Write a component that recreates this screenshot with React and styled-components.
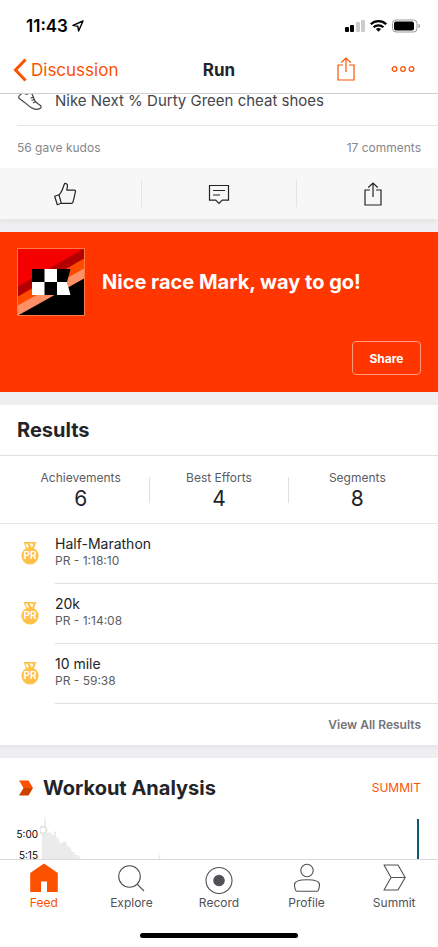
import React from "react";
import styled, { createGlobalStyle } from "styled-components";

const stats = [
  { label: "Achievements", value: 6 },
  { label: "Best Efforts", value: 4 },
  { label: "Segments", value: 8 },
];

const results = [
  { name: "Half-Marathon", time: "1:18:10" },
  { name: "20k", time: "1:14:08" },
  { name: "10 mile", time: "59:38" },
];

const tabs = [
  { name: "Feed", Icon: HomeIcon },
  { name: "Explore", Icon: SearchIcon },
  { name: "Record", Icon: RecordIcon },
  { name: "Profile", Icon: ProfileIcon },
  { name: "Summit", Icon: SummitIcon },
];

export default function App() {
  return (
    <>
      <GlobalStyle />
      <Screen>
        <StatusBar>
          <Clock>
            11:43
            <LocationIcon />
          </Clock>
          <StatusIcons />
        </StatusBar>

        <NavBar>
          <BackLink href="#discussion">
            <BackIcon />
            Discussion
          </BackLink>
          <NavTitle>Run</NavTitle>
          <NavActions>
            <IconButton aria-label="Share activity">
              <ShareIcon width={20} height={26} />
            </IconButton>
            <IconButton aria-label="More">
              <MoreIcon />
            </IconButton>
          </NavActions>
        </NavBar>

        <Feed>
          <Card>
            <GearRow>
              <ShoeIcon />
              <GearName>Nike Next % Durty Green cheat shoes</GearName>
            </GearRow>
            <KudosRow>
              <span>56 gave kudos</span>
              <span>17 comments</span>
            </KudosRow>
            <ActionBar>
              <ActionList>
                <ActionButton aria-label="Give kudos">
                  <ThumbIcon />
                </ActionButton>
                <ActionButton aria-label="Comment">
                  <CommentIcon />
                </ActionButton>
                <ActionButton aria-label="Share">
                  <ShareIcon width={20} height={26} />
                </ActionButton>
              </ActionList>
            </ActionBar>
          </Card>

          <Banner>
            <BannerTop>
              <RaceBadge />
              <BannerTitle>Nice race Mark, way to go!</BannerTitle>
            </BannerTop>
            <ShareButton>Share</ShareButton>
          </Banner>

          <Card>
            <CardHeader>
              <CardTitle>Results</CardTitle>
            </CardHeader>
            <StatList>
              {stats.map((stat) => (
                <Stat key={stat.label}>
                  <StatLabel>{stat.label}</StatLabel>
                  <StatValue>{stat.value}</StatValue>
                </Stat>
              ))}
            </StatList>
            <ResultList>
              {results.map((result) => (
                <ResultRow key={result.name}>
                  <MedalIcon />
                  <ResultText>
                    <ResultName>{result.name}</ResultName>
                    <ResultTime>PR - {result.time}</ResultTime>
                  </ResultText>
                </ResultRow>
              ))}
            </ResultList>
            <CardFooter>
              <a href="#results">View All Results</a>
            </CardFooter>
          </Card>

          <Card>
            <AnalysisHeader>
              <ChevronMark />
              <CardTitle>Workout Analysis</CardTitle>
              <SummitLink href="#summit">SUMMIT</SummitLink>
            </AnalysisHeader>
            <Chart>
              <Axis>
                <span>5:00</span>
                <span>5:15</span>
              </Axis>
              <PaceChart />
            </Chart>
          </Card>
        </Feed>

        <TabBar>
          {tabs.map(({ name, Icon }) => (
            <Tab key={name} href={`#${name.toLowerCase()}`} $active={name === "Feed"}>
              <Icon />
              {name}
            </Tab>
          ))}
        </TabBar>
        <HomeArea>
          <HomeIndicator />
        </HomeArea>
      </Screen>
    </>
  );
}

/* icons */

function LocationIcon() {
  return (
    <svg width="12" height="12" viewBox="0 0 12 12" fill="none" stroke="#000" strokeWidth="1.4" strokeLinejoin="round">
      <path d="M11 1 1 5.4l4.800.8L6.600 11z" />
    </svg>
  );
}

function StatusIcons() {
  return (
    <svg width="76" height="14" viewBox="0 0 76 14">
      <rect x="0" y="8" width="4" height="5" rx="1" />
      <rect x="5" y="6" width="4" height="7" rx="1" />
      <rect x="11" y="3" width="4" height="10" rx="1" fill="#ccc" />
      <rect x="16" y="1" width="4" height="12" rx="1" fill="#ccc" />
      <g fill="none" stroke="#000" strokeWidth="2.3">
        <path d="M25.8 5.2a11 11 0 0 1 15.4 0" />
        <path d="M28.6 8.3a7 7 0 0 1 9.8 0" />
      </g>
      <path d="M33.5 12.8l-2.6-2.7a3.8 3.8 0 0 1 5.2 0z" />
      <rect x="47.5" y="1" width="24.5" height="12" rx="3.5" fill="none" stroke="#999" />
      <rect x="49" y="2.6" width="20" height="8.9" rx="2" />
      <path d="M73.5 5v4c1-.3 1.5-1.1 1.5-2s-.5-1.7-1.5-2z" fill="#999" />
    </svg>
  );
}

function BackIcon() {
  return (
    <svg width="14" height="24" viewBox="0 0 14 24" fill="none" stroke="currentColor" strokeWidth="3">
      <path d="M12.5 1.5 2.5 12l10 10.5" />
    </svg>
  );
}

function ShareIcon(props) {
  return (
    <svg {...props} viewBox="0 0 20 26" fill="none" stroke="currentColor" strokeWidth="1.2">
      <path d="M7 9H2v15h16V9h-5M10 16V2M5.3 6.500 10 2l4.7 4.500" />
    </svg>
  );
}

function MoreIcon() {
  return (
    <svg width="24" height="8" viewBox="0 0 24 8" fill="none" stroke="currentColor" strokeWidth="1.3">
      <circle cx="3.5" cy="4" r="2.3" />
      <circle cx="12" cy="4" r="2.3" />
      <circle cx="20.5" cy="4" r="2.3" />
    </svg>
  );
}

function ShoeIcon() {
  return (
    <svg width="26" height="16" viewBox="0 0 26 16" fill="none" stroke="#444" strokeWidth="1.2" strokeLinejoin="round">
      <path d="M5-1C3.800.8 1.600 1.800 1.600 3.200c0 1.200 1.400 1.900 2.700 2.700 3.200 2 6.200 5.200 9.700 7.500 2.800 1.800 6.300 2.300 8.800 1.200 1.800-.8 1.600-2.400.4-3.400-2-1.600-4.800-2.500-5.600-5L14.200-2" />
      <path d="M7.500-1c.8 1.700 4 1.700 5-1M13.500 4.200l3-1.200M14.500 6.500l3-1.200M16 9l2.600-1.500" />
    </svg>
  );
}

function ThumbIcon() {
  return (
    <svg width="24" height="26" viewBox="0 0 24 26" fill="none" stroke="currentColor" strokeWidth="1.2" strokeLinejoin="round">
      <path d="M1.700 15.200l4.300-1.400 2.300 8.500-4 1.400z" />
      <path d="M6 13.800c2.900-2.500 3.700-6.300 5.300-10.600.5-1.300 3.200-.7 3.200 1.200 0 1.700-.5 3.200-.7 4.700h7.500c1.200 0 1.500 1 1.100 1.800l-.7 3-.8 3.700-1.100 4c-.2.500-.5.700-1 .7H8.300" />
    </svg>
  );
}

function CommentIcon() {
  return (
    <svg width="22" height="22" viewBox="0 0 22 22" fill="none" stroke="currentColor" strokeWidth="1.2">
      <path d="M1.500 2.500h19v14.600h-6.200L11 20.400l-3.300-3.300H1.500z" />
      <path d="M5 7.500h12M5 12h7" />
    </svg>
  );
}

function RaceBadge() {
  return (
    <svg width="68" height="68" viewBox="0 0 68 68">
      <rect width="68" height="68" fill="#f50000" />
      <path d="M0 39 68 0v68H0z" fill="#b30000" />
      <path d="M0 49 68 10v58H0z" fill="#ff4a00" />
      <path d="M0 58 68 20v48H0z" fill="#ff8f66" />
      <path d="M0 68 68 30v38z" />
      <path d="M15 21h38.500l-3.500 13 3.500 13H15z" />
      <path d="M27.500 21H40v13h10l3.500 13H40V34H27.500v13H15V34h12.500z" fill="#fff" />
      <rect x=".5" y=".5" width="67" height="67" fill="none" stroke="#ff7a45" />
    </svg>
  );
}

function MedalIcon() {
  return (
    <svg width="18" height="26" viewBox="0 0 18 26">
      <path d="M2.500 1h13l-2.600 6.500H5.100z" fill="#ffc247" />
      <path d="M4.600 2.500h1.200l2.500 4.300H6zM8.200 2.500h3l1 1.700-1.200 2.300zM12.600 2.500h1l-.6 1.200z" fill="#fff" />
      <circle cx="9" cy="14.800" r="8.600" fill="#ffc247" />
      <text x="9" y="18" textAnchor="middle" fontSize="10" fontWeight="600" fill="#fff">
        PR
      </text>
    </svg>
  );
}

function ChevronMark() {
  return (
    <svg width="14" height="16" viewBox="0 0 14 16">
      <path d="M0 .5h9.500L14 8H4.500z" fill="#fc5200" />
      <path d="M0 15.500h9.500L14 8H4.500z" fill="#cc4200" />
    </svg>
  );
}

function PaceChart() {
  return (
    <PaceSvg>
      <path
        d="M2 46V18h2V9l1-9 1 5v11l2 2 3-1 1 3h2v-4l2 1v5l3 2v3l2 1 5-2 1 5 3 1 2 5h2l1 3h3l3 4 4 1v2zM118 46l1-11 1 9 1 2zM126 46l1-3 3 3z"
        fill="#ebebeb"
      />
      <circle cx="3" cy="15" r="3.500" fill="#fff" stroke="#e2e2e2" strokeWidth="2" />
      <line x1="100%" x2="100%" y1="4" y2="46" stroke="#0d5c75" strokeWidth="4" />
    </PaceSvg>
  );
}

function HomeIcon() {
  return (
    <svg width="32" height="32" viewBox="0 0 32 32">
      <path d="M16 1.500 29.800 11v19H19V19.500h-6V30H2.200V11z" fill="currentColor" />
    </svg>
  );
}

function SearchIcon() {
  return (
    <svg width="32" height="32" viewBox="0 0 32 32" fill="none" stroke="currentColor" strokeWidth="1.1">
      <circle cx="14.500" cy="14.500" r="10.800" />
      <path d="M22 22l7 7" />
    </svg>
  );
}

function RecordIcon() {
  return (
    <svg width="32" height="32" viewBox="0 0 32 32" fill="none" stroke="currentColor" strokeWidth="1.1">
      <circle cx="16" cy="18.500" r="13" />
      <circle cx="16" cy="18.500" r="5.200" fill="currentColor" />
    </svg>
  );
}

function ProfileIcon() {
  return (
    <svg width="32" height="32" viewBox="0 0 32 32" fill="none" stroke="currentColor" strokeWidth="1.1">
      <circle cx="16" cy="8.500" r="6.200" />
      <path d="M3.500 22.800c0-3 5-5 12.500-5s12.500 2 12.500 5c0 2.500-.6 4.500-1.300 5.800-.2.500-.6.700-1.200.7H6c-.6 0-1-.2-1.200-.7-.7-1.300-1.300-3.300-1.300-5.800z" />
    </svg>
  );
}

function SummitIcon() {
  return (
    <svg width="32" height="32" viewBox="0 0 32 32" fill="none" stroke="currentColor" strokeWidth="1.1" strokeLinejoin="round">
      <path d="M6 3h14l7.200 12.500L20 28H6l7-12.500zM13 15.500h14.200" />
    </svg>
  );
}

/* styles */

const orange = "#fc5200";

const GlobalStyle = createGlobalStyle`
  * {
    box-sizing: border-box;
  }

  body {
    margin: 0;
    font-family: Inter, "Liberation Sans", sans-serif;
    color: #242428;
    background-color: #fff;
  }

  button {
    font-family: inherit;
    color: inherit;
    background: none;
    border: none;
    padding: 0;
    cursor: pointer;
  }

  a {
    color: inherit;
    text-decoration: none;
  }

  svg {
    display: block;
    flex-shrink: 0;
  }
`;

const Screen = styled.div`
  display: flex;
  flex-direction: column;
  height: 100vh;
`;

const StatusBar = styled.div`
  display: flex;
  align-items: center;
  justify-content: space-between;
  padding: 6px 17px 0 26px;
  height: 46px;
`;

const Clock = styled.div`
  display: flex;
  align-items: center;
  gap: 4px;
  font-size: 17px;
  font-weight: 600;
  color: #000;
`;

const NavBar = styled.header`
  display: grid;
  grid-template-columns: 1fr auto 1fr;
  align-items: center;
  height: 48px;
  padding: 0 23px 0 13px;
  border-bottom: 1px solid #d0d0d2;
`;

const BackLink = styled.a`
  display: flex;
  align-items: center;
  gap: 4px;
  font-size: 17px;
  color: ${orange};
`;

const NavTitle = styled.h1`
  margin: 0;
  padding-left: 10px;
  font-size: 17px;
  font-weight: 700;
`;

const NavActions = styled.div`
  display: flex;
  align-items: center;
  justify-content: flex-end;
  gap: 35px;
  padding-bottom: 2px;
  color: ${orange};
`;

const IconButton = styled.button`
  display: flex;
`;

const Feed = styled.main`
  flex: 1;
  min-height: 0;
  display: flex;
  flex-direction: column;
  gap: 13px;
  overflow: hidden;
  background-color: #efeff1;
`;

const Card = styled.section`
  flex-shrink: 0;
  background-color: #fff;
  box-shadow: 0 2px 6px rgba(0, 0, 30, 0.05);
`;

const GearRow = styled.div`
  display: flex;
  align-items: flex-start;
  gap: 12px;
  height: 32px;
  margin-left: 17px;
  border-bottom: 1px solid #e6e6e8;
`;

const GearName = styled.span`
  font-size: 15px;
  line-height: 14px;
  color: #44444a;
`;

const KudosRow = styled.div`
  display: flex;
  align-items: center;
  justify-content: space-between;
  height: 42px;
  padding: 0 17px;
  font-size: 12px;
  color: #86868b;
`;

const ActionBar = styled.div`
  overflow: hidden;
  background-color: #f7f7f7;
`;

const ActionList = styled.div`
  display: flex;
  height: 51px;
  margin: 0 -12px;
  padding: 12px 0;
`;

const ActionButton = styled.button`
  flex: 1;
  display: flex;
  align-items: center;
  justify-content: center;

  & + & {
    border-left: 1px solid #e4e4e6;
  }
`;

const Banner = styled.section`
  flex-shrink: 0;
  display: flex;
  flex-direction: column;
  justify-content: space-between;
  height: 160px;
  padding: 17px;
  padding-top: 16px;
  color: #fff;
  background-color: #ff3600;
`;

const BannerTop = styled.div`
  display: flex;
  align-items: center;
  gap: 17px;
`;

const BannerTitle = styled.h2`
  margin: 0;
  font-size: 20px;
  font-weight: 700;
`;

const ShareButton = styled.button`
  align-self: flex-end;
  width: 69px;
  height: 34px;
  border: 1px solid #ff9b7f;
  border-radius: 4px;
  font-size: 12px;
  font-weight: 700;
`;

const CardHeader = styled.div`
  display: flex;
  align-items: center;
  height: 51px;
  padding: 0 17px;
  border-bottom: 1px solid #e0e0e2;
`;

const CardTitle = styled.h2`
  margin: 0;
  font-size: 20px;
  font-weight: 700;
`;

const StatList = styled.div`
  display: flex;
  height: 68px;
  padding: 0 12px;
  align-items: center;
  border-bottom: 1px solid #e6e6e8;
`;

const Stat = styled.div`
  flex: 1;
  display: flex;
  flex-direction: column;
  align-items: center;
  justify-content: center;
  gap: 2px;
  height: 26px;

  & + & {
    border-left: 1px solid #e0e0e2;
  }
`;

const StatLabel = styled.span`
  font-size: 12px;
  line-height: 16px;
  color: #5c5c61;
`;

const StatValue = styled.span`
  font-size: 21px;
  line-height: 22px;
`;

const ResultList = styled.ul`
  margin: 0;
  padding: 0;
  list-style: none;
`;

const ResultRow = styled.li`
  display: flex;
  align-items: center;
  gap: 16px;
  height: 60px;
  padding-left: 21px;
`;

const ResultText = styled.div`
  flex: 1;
  display: flex;
  flex-direction: column;
  height: 60px;
  padding-top: 10px;
  border-bottom: 1px solid #e0e0e4;
`;

const ResultName = styled.span`
  font-size: 14px;
  line-height: 20px;
`;

const ResultTime = styled.span`
  font-size: 12px;
  line-height: 14px;
  color: #5c5c61;
`;

const CardFooter = styled.div`
  display: flex;
  align-items: center;
  justify-content: flex-end;
  height: 41px;
  padding: 0 17px;
  font-size: 12px;
  font-weight: 600;
  color: #74747a;
`;

const AnalysisHeader = styled.div`
  display: flex;
  align-items: center;
  gap: 10px;
  height: 57px;
  padding: 2px 17px 0 19px;
`;

const SummitLink = styled.a`
  margin-left: auto;
  font-size: 12px;
  color: ${orange};
`;

const Chart = styled.div`
  display: flex;
  gap: 2px;
  height: 46px;
  padding: 0 19px 0 17px;
  overflow: hidden;
`;

const Axis = styled.div`
  display: flex;
  flex-direction: column;
  width: 21px;
  padding-top: 9px;
  align-items: flex-end;
  font-size: 10px;
  line-height: 21px;
  color: #000;
`;

const PaceSvg = styled.svg`
  flex: 1;
  height: 46px;
`;

const TabBar = styled.nav`
  display: flex;
  height: 54px;
  padding-top: 2px;
  border-top: 1px solid #d8d8da;
`;

const Tab = styled.a`
  flex: 1;
  display: flex;
  flex-direction: column;
  align-items: center;
  gap: 1px;
  font-size: 12px;
  line-height: 16px;
  color: ${({ $active }) => ($active ? orange : "#515156")};
`;

const HomeArea = styled.div`
  display: flex;
  justify-content: center;
  align-items: flex-end;
  height: 34px;
  padding-bottom: 9px;
`;

const HomeIndicator = styled.div`
  width: 36%;
  height: 5px;
  border-radius: 3px;
  background-color: #000;
`;
